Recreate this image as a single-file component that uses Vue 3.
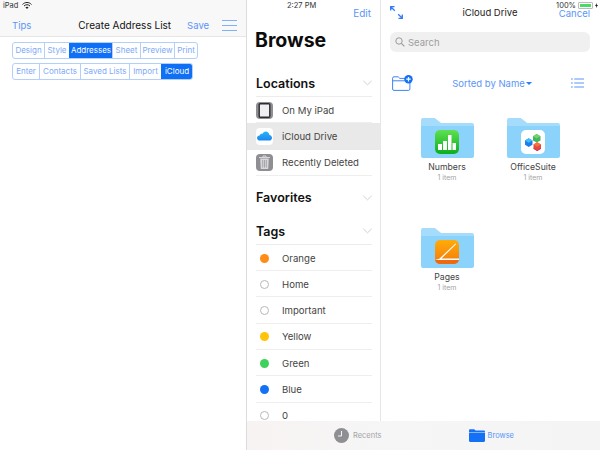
<script setup>
const tabsTop = [
  { name: 'Design', w: 31 },
  { name: 'Style', w: 25 },
  { name: 'Addresses', w: 43, on: true },
  { name: 'Sheet', w: 28 },
  { name: 'Preview', w: 34 },
  { name: 'Print', w: 23 },
]
const tabsBottom = [
  { name: 'Enter', w: 26 },
  { name: 'Contacts', w: 41 },
  { name: 'Saved Lists', w: 49 },
  { name: 'Import', w: 32 },
  { name: 'iCloud', w: 31, on: true },
]
const tags = [
  { name: 'Orange', color: '#ff8c14' },
  { name: 'Home' },
  { name: 'Important' },
  { name: 'Yellow', color: '#ffc30a' },
  { name: 'Green', color: '#3ed15c' },
  { name: 'Blue', color: '#1470f5' },
  { name: '0' },
]
</script>

<template>
  <div class="screen">
    <section class="left">
      <header class="left-head">
        <span class="link tips">Tips</span>
        <span class="left-title">Create Address List</span>
        <span class="link save">Save</span>
        <span class="burger"><i></i><i></i><i></i></span>
      </header>
      <div class="tabs">
        <div class="tab-row">
          <span v-for="t in tabsTop" :key="t.name" class="tab" :class="{ on: t.on }" :style="{ width: t.w + 'px' }">{{ t.name }}</span>
        </div>
        <div class="tab-row">
          <span v-for="t in tabsBottom" :key="t.name" class="tab" :class="{ on: t.on }" :style="{ width: t.w + 'px' }">{{ t.name }}</span>
        </div>
      </div>
    </section>

    <section class="files">
      <div class="split">
        <aside class="side">
          <div class="edit-row"><span class="link">Edit</span></div>
          <h1>Browse</h1>

          <div class="sec first">
            <span>Locations</span>
            <svg class="chev" width="9" height="6" viewBox="0 0 9 6"><path d="M.3 .8 4.500 4.800 8.700 .8" fill="none" stroke="#d0d0d3" stroke-width="1"/></svg>
          </div>
          <div class="row">
            <span class="ico grey">
              <svg width="17" height="17" viewBox="0 0 17 17"><rect x="3.200" y="1.800" width="10.600" height="13.400" rx="1" fill="#efeff1" stroke="#2c2c30" stroke-width="1.400"/></svg>
            </span>
            <span class="lbl">On My iPad</span>
          </div>
          <div class="row sel">
            <span class="ico white">
              <svg width="15" height="10" viewBox="0 0 15 10"><defs><linearGradient id="cl" x1="0" y1="0" x2="0" y2="1"><stop offset="0" stop-color="#2cb4f5"/><stop offset="1" stop-color="#1b86f0"/></linearGradient></defs><path d="M3 9.600C1.300 9.600 0 8.500 0 7 0 5.600 1.100 4.600 2.500 4.500 3.100 3.200 4.200 2.700 5.300 2.900 6 1.200 7.500 .3 9.100 .4 11.100 .6 12.300 2.100 12.400 4.100 13.900 4.400 15 5.500 15 7 15 8.500 13.800 9.600 12.200 9.600Z" fill="url(#cl)"/></svg>
            </span>
            <span class="lbl">iCloud Drive</span>
          </div>
          <div class="row">
            <span class="ico grey">
              <svg width="13" height="15" viewBox="0 0 13 15"><path d="M1 2.500h11M5 2.300V1h3v1.300" fill="none" stroke="#d8d8dc" stroke-width="1"/><path d="M2.200 3.600h8.600l-.6 10.400H2.800Z" fill="#d8d8dc"/><path d="M4.700 5v7.500M6.500 5v7.500M8.300 5v7.500" stroke="#8e8e93" stroke-width=".7"/></svg>
            </span>
            <span class="lbl">Recently Deleted</span>
          </div>

          <div class="sec fav">
            <span>Favorites</span>
            <svg class="chev" width="9" height="6" viewBox="0 0 9 6"><path d="M.3 .8 4.500 4.800 8.700 .8" fill="none" stroke="#d0d0d3" stroke-width="1"/></svg>
          </div>
          <div class="sec tagsec">
            <span>Tags</span>
            <svg class="chev" width="9" height="6" viewBox="0 0 9 6"><path d="M.3 .8 4.500 4.800 8.700 .8" fill="none" stroke="#d0d0d3" stroke-width="1"/></svg>
          </div>
          <div v-for="t in tags" :key="t.name" class="row">
            <span class="dot-wrap">
              <span class="dot" :class="{ empty: !t.color }" :style="t.color ? { background: t.color } : null"></span>
            </span>
            <span class="lbl">{{ t.name }}</span>
          </div>
        </aside>

        <main class="drive">
          <div class="drive-head">
            <svg class="expand" width="13" height="13" viewBox="0 0 13 13"><path d="M.7 4.500V.7H4.500M.7 .7 4.800 4.800M12.300 8.500v3.800H8.500M12.300 12.300 8.200 8.200" fill="none" stroke="#2f7cf6" stroke-width="1.300"/></svg>
            <span class="drive-title">iCloud Drive</span>
            <span class="link cancel">Cancel</span>
          </div>
          <div class="search">
            <svg width="10" height="10" viewBox="0 0 10 10"><circle cx="4" cy="4" r="3.200" fill="none" stroke="#9a9a9e" stroke-width="1"/><path d="M6.400 6.400 9.400 9.400" stroke="#9a9a9e" stroke-width="1.200"/></svg>
            <span>Search</span>
          </div>
          <div class="tools">
            <svg width="21" height="16" viewBox="0 0 21 16"><path d="M.6 14V3.200C.6 2.300 1.100 1.800 2 1.800h4.200L7.800 3.400H16.500C17.400 3.400 17.900 3.900 17.900 4.800V14C17.900 14.900 17.400 15.400 16.500 15.400H2C1.100 15.400 .6 14.900 .6 14ZM.6 5.800H17.900" fill="none" stroke="#3d84f6" stroke-width="1"/><circle cx="16.500" cy="4.200" r="4.200" fill="#1470f5"/><path d="M16.500 2v4.400M14.300 4.200h4.400" stroke="#fff" stroke-width="1.200"/></svg>
            <span class="sort">Sorted by Name<i class="caret"></i></span>
            <span class="list-ico">
              <svg width="13" height="10" viewBox="0 0 13 10"><path d="M0 1h1.800M3.200 1H13M0 5h1.800M3.200 5H13M0 9h1.800M3.200 9H13" stroke="#5b95f7" stroke-width="1.200" fill="none"/></svg>
            </span>
          </div>
          <div class="grid">
            <div class="item">
              <div class="folder">
                <div class="tab-ear"></div>
                <div class="body">
                  <span class="app numbers">
                    <svg width="18" height="16" viewBox="0 0 18 16"><path d="M0 10h4v6H0zM5 7h4v9H5zM10 1h3.500v15H10zM14.500 9H18v7h-3.500z" fill="#fff"/></svg>
                  </span>
                </div>
              </div>
              <div class="name">Numbers</div>
              <div class="count">1 item</div>
            </div>
            <div class="item">
              <div class="folder">
                <div class="tab-ear"></div>
                <div class="body">
                  <span class="app office">
                    <svg width="19" height="19" viewBox="0 0 19 19">
                      <path d="M9 3.200 12.700 1 16.500 3.200v4.200L12.700 9.600 9 7.400Z" fill="#3fb85f"/>
                      <path d="M9 3.200 12.700 5.400 16.500 3.200 12.700 1Z" fill="#7ad06a"/>
                      <path d="M1 7.500 4.700 5.300 8.500 7.500v4.200L4.700 13.900 1 11.700Z" fill="#1e7cf0"/>
                      <path d="M1 7.500 4.700 9.700 8.500 7.500 4.700 5.300Z" fill="#3fc0f5"/>
                      <path d="M9.500 11.500 13.200 9.300 17 11.500v4.200L13.200 17.900 9.500 15.700Z" fill="#e8483f"/>
                      <path d="M9.500 15 13.200 17.200 17 15v.7L13.200 17.900 9.500 15.700Z" fill="#c9256b"/>
                      <path d="M9.500 11.500 13.200 13.700 17 11.500 13.200 9.300Z" fill="#f2743a"/>
                    </svg>
                  </span>
                </div>
              </div>
              <div class="name">OfficeSuite</div>
              <div class="count">1 item</div>
            </div>
            <div class="item">
              <div class="folder">
                <div class="tab-ear"></div>
                <div class="body">
                  <span class="app pages">
                    <svg width="24" height="24" viewBox="0 0 24 24"><path d="M0 20h24v-1.500H4.500L20.500 3.500 21.200 4 6.500 18.500H5Z" fill="#fff"/><path d="M0 20h24v4H0Z" fill="#ee6a10"/></svg>
                  </span>
                </div>
              </div>
              <div class="name">Pages</div>
              <div class="count">1 item</div>
            </div>
          </div>
        </main>
      </div>

      <footer class="tabbar">
        <div class="tb-item recents">
          <svg width="15" height="15" viewBox="0 0 15 15"><circle cx="7.500" cy="7.500" r="7.500" fill="#8f8f93"/><path d="M7.500 3v5H4" fill="none" stroke="#f6f6f6" stroke-width="1"/></svg>
          <span>Recents</span>
        </div>
        <div class="tb-item browse">
          <svg width="16" height="13" viewBox="0 0 16 13"><path d="M0 1.500C0 .7.500.2 1.200.2h4l1.400 1.400h8.200c.7 0 1.200.5 1.200 1.200V2.900H0Z" fill="#1470f5"/><path d="M0 3.500h16v8.300c0 .7-.5 1.200-1.200 1.200H1.200C.5 13 0 12.500 0 11.800Z" fill="#1470f5"/></svg>
          <span>Browse</span>
        </div>
      </footer>
    </section>

    <div class="status">
      <span class="st-left">
        iPad
        <svg width="10" height="7" viewBox="0 0 10 7"><path d="M.5 2.500C3-.2 7-.2 9.500 2.500M2 4C3.700 2.300 6.300 2.300 8 4" fill="none" stroke="#222" stroke-width="1"/><path d="M5 7 3.400 5.300C4.300 4.500 5.700 4.500 6.600 5.300Z" fill="#222"/></svg>
      </span>
      <span class="st-time">2:27 PM</span>
      <span class="st-right">
        100%
        <span class="batt"><i></i></span>
        <svg width="3" height="5" viewBox="0 0 3 5"><path d="M2 0 0 3h1.200L1 5l2-3H1.800Z" fill="#222"/></svg>
      </span>
    </div>
  </div>
</template>

<style scoped>
.screen {
  position: relative;
  display: flex;
  width: 600px;
  height: 450px;
  overflow: hidden;
  background: #fff;
  font-family: Inter, "Liberation Sans", sans-serif;
  color: #111;
}
.link { color: #5b95f7; }

.left { width: 246px; flex: none; }
.left-head {
  display: flex;
  align-items: center;
  height: 37px;
  padding: 14px 12px 0;
  box-sizing: border-box;
  background: #f8f8f8;
  border-bottom: 1px solid #e6e6e6;
  font-size: 10px;
  white-space: nowrap;
}
.tips, .save { font-size: 9.500px; }
.left-title { margin-left: 47px; color: #111; }
.save { margin-left: 16px; }
.burger {
  display: flex;
  flex-direction: column;
  gap: 4px;
  margin-left: 13px;
}
.burger i { display: block; width: 15px; height: 1px; background: #7fb0fa; }

.tabs { padding: 5px 12px 0; display: flex; flex-direction: column; gap: 4px; }
.tab-row {
  display: flex;
  align-self: flex-start;
  border: 1px solid #b5cffb;
  border-radius: 3px;
  overflow: hidden;
}
.tab {
  box-sizing: border-box;
  height: 15px;
  line-height: 15px;
  text-align: center;
  font-size: 8px;
  color: #7ea9f7;
  border-left: 1px solid #b5cffb;
  white-space: nowrap;
}
.tab:first-child { border-left: 0; }
.tab.on { background: #0f6ff5; color: #fff; border-left-color: #0f6ff5; }

.files {
  flex: 1;
  display: flex;
  flex-direction: column;
  border-left: 1px solid #dcdcdc;
  min-width: 0;
}
.split { flex: 1; display: flex; min-height: 0; }

.side {
  width: 134px;
  flex: none;
  box-sizing: border-box;
  border-right: 1px solid #e6e6e6;
  overflow: hidden;
}
.edit-row {
  height: 29px;
  padding: 7px 9px 0 0;
  box-sizing: border-box;
  text-align: right;
  font-size: 10px;
}
h1 {
  margin: 0;
  padding-left: 8px;
  font-size: 19.500px;
  line-height: 22px;
  font-weight: 700;
  color: #0c0c0c;
}
.sec {
  display: flex;
  align-items: center;
  justify-content: space-between;
  margin: 0 8px 0 9px;
  font-size: 12.500px;
  font-weight: 600;
  color: #111;
  height: 20px;
}
.sec.first { margin-top: 22px; border-bottom: 1px solid #ececec; height: 24px; padding-bottom: 3px; box-sizing: border-box; }
.sec.fav { margin-top: 12px; }
.sec.tagsec { margin-top: 13px; height: 24px; padding-bottom: 2px; box-sizing: border-box; border-bottom: 1px solid #ececec; }

.row {
  position: relative;
  display: flex;
  align-items: center;
  height: 26.300px;
  box-sizing: border-box;
  padding-left: 9px;
  font-size: 9.600px;
  color: #444;
}
.row::after {
  content: "";
  position: absolute;
  left: 9px;
  right: 8px;
  bottom: 0;
  height: 1px;
  background: #eeeeee;
}
.row.sel { background: #e9e9e9; }
.row.sel::after { display: none; }
.ico {
  width: 17px;
  height: 17px;
  border-radius: 4px;
  display: flex;
  align-items: center;
  justify-content: center;
  flex: none;
}
.ico.grey { background: #8e8e93; }
.ico.white { background: #fff; }
.lbl { margin-left: 9px; white-space: nowrap; }
.dot-wrap { width: 17px; display: flex; justify-content: center; flex: none; }
.dot { width: 9px; height: 9px; border-radius: 50%; box-sizing: border-box; }
.dot.empty { border: 1px solid #b8b8bb; background: #fff; }

.drive { flex: 1; padding: 0 10px 0 9px; min-width: 0; }
.drive-head {
  position: relative;
  height: 27px;
  padding-top: 6px;
  box-sizing: border-box;
  display: flex;
  justify-content: space-between;
}
.drive-title {
  position: absolute;
  left: 0;
  right: 0;
  top: 7px;
  text-align: center;
  font-size: 9.500px;
  color: #222;
}
.cancel { font-size: 9.500px; margin-top: 2px; }
.search {
  display: flex;
  align-items: center;
  gap: 3px;
  height: 20px;
  margin-top: 5px;
  padding-left: 5px;
  border-radius: 6px;
  background: #f0f0f0;
  color: #9d9d9f;
  font-size: 9.500px;
}
.tools {
  display: flex;
  align-items: center;
  justify-content: space-between;
  height: 20px;
  margin-top: 21px;
  padding-left: 2px;
  padding-right: 6px;
}
.sort { color: #5b95f7; font-size: 9.500px; display: flex; align-items: center; }
.caret {
  display: inline-block;
  margin-left: 1px;
  border-left: 3px solid transparent;
  border-right: 3px solid transparent;
  border-top: 3.500px solid #2f7cf6;
}
.list-ico { display: flex; }

.grid {
  display: grid;
  grid-template-columns: repeat(2, 86px);
  grid-auto-rows: 110px;
  margin-top: 25px;
  margin-left: 14px;
}
.item { display: flex; flex-direction: column; align-items: center; }
.folder { position: relative; width: 53px; height: 40px; }
.tab-ear {
  position: absolute;
  left: 0;
  top: 0;
  width: 21px;
  height: 8px;
  background: #a5dcfb;
  border-radius: 2px 0 0 0;
  clip-path: polygon(0 0, 68% 0, 100% 65%, 100% 100%, 0 100%);
}
.body {
  position: absolute;
  left: 0;
  right: 0;
  top: 5px;
  bottom: 0;
  border-radius: 2px;
  background: linear-gradient(#a5dcfb 0 3px, #8bd3fb 3px);
  display: flex;
  justify-content: center;
  padding-top: 7px;
  box-sizing: border-box;
}
.app {
  width: 24px;
  height: 24px;
  border-radius: 5px;
  overflow: hidden;
  display: flex;
  align-items: center;
  justify-content: center;
}
.numbers { background: linear-gradient(#5fe051, #0cae1e); }
.office { background: #fff; }
.pages { background: linear-gradient(#ffac0a, #f57a0c); }
.name { margin-top: 4px; font-size: 8.700px; line-height: 11px; color: #444; }
.count { font-size: 7px; line-height: 9px; color: #a3a3a6; }

.tabbar {
  height: 29px;
  flex: none;
  display: flex;
  align-items: center;
  background: linear-gradient(90deg, #f7f3f2, #f6f6f6 40%, #f4f4f4);
}
.tb-item { display: flex; align-items: center; gap: 4px; font-size: 7.500px; }
.recents { margin-left: 87px; color: #a3a3a6; }
.browse { margin-left: 87px; color: #5b95f7; gap: 3px; }

.status { position: absolute; inset: 0 0 auto 0; height: 11px; font-size: 7.500px; color: #333; }
.st-left { position: absolute; left: 3px; top: 1px; display: flex; align-items: center; gap: 4px; }
.st-time { position: absolute; left: 287px; top: 1px; }
.st-right { position: absolute; right: 2px; top: 1px; display: flex; align-items: center; gap: 2px; }
.batt { display: block; width: 15px; height: 7px; padding: 1px; border: 1px solid #bbb; box-sizing: border-box; border-radius: 1px; }
.batt i { display: block; height: 100%; background: #4cd964; }
</style>
